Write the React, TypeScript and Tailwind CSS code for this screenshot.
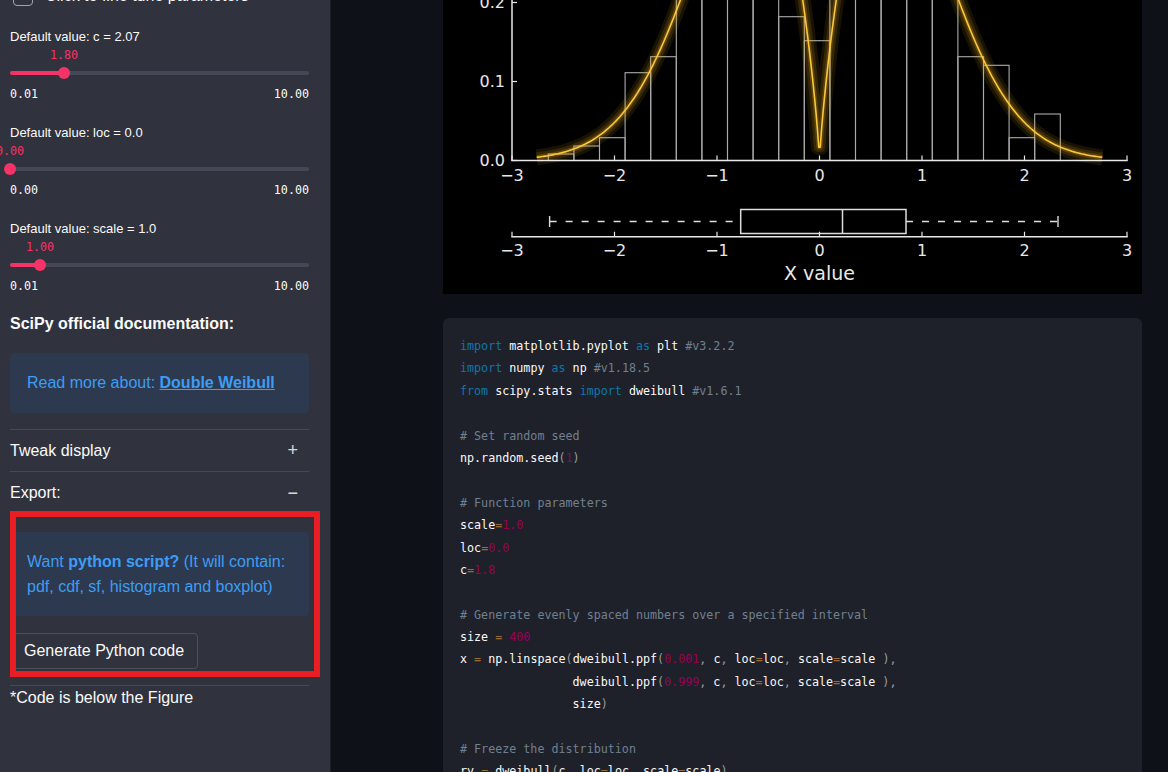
import React from 'react';

// Streamlit-like dark page: sidebar with sliders / expanders, matplotlib figure and code on the right.

function ParamSlider({ label, value, min, max, pos }: { label: string; value: string; min: string; max: string; pos: number }) {
  return (
    <div className="flex flex-col">
      <div className="h-4 text-[13px] leading-4 text-[#fafafa]">{label}</div>
      <div className="relative h-5">
        <span
          className="absolute top-0 -translate-x-1/2 font-['DejaVu_Sans_Mono',monospace] text-[11.7px] leading-5 text-[#f63366]"
          style={{ left: pos }}
        >
          {value}
        </span>
      </div>
      <div className="relative flex h-4 items-center">
        <div className="h-1 w-full rounded-full bg-[#464858]" />
        <div className="absolute left-0 h-1 rounded-full bg-[#f63366]" style={{ width: pos }} />
        <div className="absolute -ml-1.5 h-3 w-3 rounded-full bg-[#f63366]" style={{ left: pos }} />
      </div>
      <div className="mt-[6px] flex h-4 items-center justify-between font-['DejaVu_Sans_Mono',monospace] text-[11.7px] text-[#fafafa]">
        <span>{min}</span>
        <span>{max}</span>
      </div>
    </div>
  );
}

function Sidebar() {
  return (
    <aside className="h-full w-[330px] shrink-0 bg-[#30323e] pl-[10px] pr-[21px] font-['Liberation_Sans',Arial,sans-serif] text-[#fafafa]">
      {/* checkbox row, scrolled mostly out of view */}
      <div className="-mt-4 flex h-6 items-center gap-3">
        <span className="ml-[3px] h-5 w-5 rounded border border-[#a3a4ad]" />
        <span className="text-[16px]">Click to fine tune parameters</span>
      </div>

      <div className="mt-[21px] flex flex-col gap-[22px]">
        <ParamSlider label="Default value: c = 2.07" value="1.80" min="0.01" max="10.00" pos={54} />
        <ParamSlider label="Default value: loc = 0.0" value="0.00" min="0.00" max="10.00" pos={0} />
        <ParamSlider label="Default value: scale = 1.0" value="1.00" min="0.01" max="10.00" pos={30} />
      </div>

      <h3 className="mt-[19px] h-5 text-[16px] font-bold leading-5">SciPy official documentation:</h3>
      <div className="mt-[19px] flex h-[60px] items-center rounded bg-[#2d394f] px-[17px] text-[16px] text-[#3d9df3]">
        <span>
          Read more about: <span className="font-bold underline">Double Weibull</span>
        </span>
      </div>

      <div className="mt-4 border-t border-[#474956]">
        <div className="flex h-[41px] items-center justify-between pr-[11px] text-[16px]">
          <span>Tweak display</span>
          <span className="text-[18px] text-[#d8d8dc]">+</span>
        </div>
        <div className="flex h-[43px] items-center justify-between border-t border-[#474956] pr-[11px] text-[16px]">
          <span>Export:</span>
          <span className="text-[18px] text-[#d8d8dc]">−</span>
        </div>
        <div className="relative border-b border-[#474956] pt-[18px] pb-4">
          <div className="flex h-[84px] flex-col justify-center rounded bg-[#2d394f] px-[17px] text-[16px] leading-[25px] text-[#3d9df3]">
            <span>
              Want <span className="font-bold">python script?</span> (It will contain:
            </span>
            <span>pdf, cdf, sf, histogram and boxplot)</span>
          </div>
          <button className="mt-[17px] flex h-9 items-center rounded border border-[#4d4f5b] bg-[#30323e] px-[13px] text-[16px] text-[#fafafa]">
            Generate Python code
          </button>
          {/* red annotation frame */}
          <div className="pointer-events-none absolute -top-[3px] left-0 h-[166px] w-[310px] border-[6px] border-[#ea1c24]" />
        </div>
      </div>
      <p className="h-6 text-[16px] leading-6">*Code is below the Figure</p>
    </aside>
  );
}

// figure coordinates: x value -> px, density -> px
const X = (v: number) => 376.5 + 102.5 * v;
const Y = (p: number) => 160.5 - 790 * p;

function curvePath() {
  const c = 1.8;
  const lo = -Math.pow(Math.log(500), 1 / c);
  const pts: string[] = [];
  for (let i = 0; i < 400; i++) {
    const x = lo + (-2 * lo * i) / 399;
    const a = Math.abs(x);
    const p = (c / 2) * Math.pow(a, c - 1) * Math.exp(-Math.pow(a, c));
    pts.push(`${X(x).toFixed(2)},${Y(p).toFixed(2)}`);
  }
  return 'M' + pts.join(' L');
}

const BAR_TOPS = [154, 146, 137.7, 72.7, 56.7, -10, -10, -10, -10, 16.7, 40.7, -10, -10, -10, -10, -10, 56.7, 65.3, 137.7, 114];
const TICKS = [-3, -2, -1, 0, 1, 2, 3];
const label = (k: number) => (k < 0 ? `−${-k}` : `${k}`);

function Figure() {
  const d = curvePath();
  return (
    <svg width="699" height="294" viewBox="0 0 699 294" className="block bg-black" fontFamily="DejaVu Sans, sans-serif">
      {/* histogram */}
      {BAR_TOPS.map((t, i) => {
        const x0 = 105.3 + 25.6 * i;
        return <rect key={i} x={x0} y={t} width={25.6} height={160.5 - t} fill="none" stroke="#ababab" strokeWidth="1.1" />;
      })}
      {/* glowing pdf */}
      <path d={d} fill="none" stroke="#f0b020" strokeOpacity="0.1" strokeWidth="16" strokeLinejoin="round" />
      <path d={d} fill="none" stroke="#f0b020" strokeOpacity="0.14" strokeWidth="10" strokeLinejoin="round" />
      <path d={d} fill="none" stroke="#f0b020" strokeOpacity="0.2" strokeWidth="5" strokeLinejoin="round" />
      <path d={d} fill="none" stroke="#fcc73c" strokeWidth="1.6" strokeLinejoin="round" />

      {/* axes */}
      <line x1="69" y1="-5" x2="69" y2="161" stroke="#e8e8e8" strokeWidth="1.5" />
      <line x1="68.3" y1="160.5" x2="684.7" y2="160.5" stroke="#e8e8e8" strokeWidth="1.6" />
      {[0, 0.1, 0.2].map((v) => (
        <g key={v}>
          <line x1="69" y1={Y(v)} x2="74" y2={Y(v)} stroke="#e8e8e8" strokeWidth="1.2" />
          <text x="62" y={Y(v) + 5.8} textAnchor="end" fontSize="16" fill="#e8e8e8">
            {v.toFixed(1)}
          </text>
        </g>
      ))}
      {TICKS.map((k) => (
        <g key={k}>
          <line x1={X(k)} y1="155.5" x2={X(k)} y2="160.5" stroke="#e8e8e8" strokeWidth="1.2" />
          <text x={X(k)} y="181" textAnchor="middle" fontSize="16" fill="#e8e8e8">
            {label(k)}
          </text>
        </g>
      ))}

      {/* boxplot */}
      <line x1="106.6" y1="221.5" x2="297.7" y2="221.5" stroke="#dddddd" strokeWidth="1.4" strokeDasharray="7 9" />
      <line x1="463" y1="221.5" x2="615" y2="221.5" stroke="#dddddd" strokeWidth="1.4" strokeDasharray="7 9" />
      <line x1="106.6" y1="216" x2="106.6" y2="227" stroke="#dddddd" strokeWidth="1.4" />
      <line x1="615" y1="216" x2="615" y2="227" stroke="#dddddd" strokeWidth="1.4" />
      <rect x="297.7" y="209.5" width="165.3" height="24" fill="none" stroke="#dddddd" strokeWidth="1.5" />
      <line x1="399.5" y1="209.5" x2="399.5" y2="233.5" stroke="#dddddd" strokeWidth="1.5" />

      <line x1="68.3" y1="236.7" x2="684.7" y2="236.7" stroke="#e8e8e8" strokeWidth="1.6" />
      {TICKS.map((k) => (
        <g key={k}>
          <line x1={X(k)} y1="231.7" x2={X(k)} y2="236.7" stroke="#e8e8e8" strokeWidth="1.2" />
          <text x={X(k)} y="256" textAnchor="middle" fontSize="16" fill="#e8e8e8">
            {label(k)}
          </text>
        </g>
      ))}
      <text x="376.5" y="280" textAnchor="middle" fontSize="19" fill="#e8e8e8">
        X value
      </text>
    </svg>
  );
}

const K = 'text-[#0b77ad]';
const CM = 'text-[#708090]';
const N = 'text-[#990055]';
const O = 'text-[#9a6e3a]';
const P = 'text-[#9a9a9a]';

type Tok = [string, string?];

const CODE: Tok[][] = [
  [['import', K], [' matplotlib.pyplot '], ['as', K], [' plt '], ['#v3.2.2', CM]],
  [['import', K], [' numpy '], ['as', K], [' np '], ['#v1.18.5', CM]],
  [['from', K], [' scipy.stats '], ['import', K], [' dweibull '], ['#v1.6.1', CM]],
  [],
  [['# Set random seed', CM]],
  [['np.random.seed'], ['(', P], ['1', N], [')', P]],
  [],
  [['# Function parameters', CM]],
  [['scale'], ['=', O], ['1.0', N]],
  [['loc'], ['=', O], ['0.0', N]],
  [['c'], ['=', O], ['1.8', N]],
  [],
  [['# Generate evenly spaced numbers over a specified interval', CM]],
  [['size '], ['=', O], [' '], ['400', N]],
  [['x '], ['=', O], [' np.linspace'], ['(', P], ['dweibull.ppf'], ['(', P], ['0.001', N], [',', P], [' c'], [',', P], [' loc'], ['=', O], ['loc'], [',', P], [' scale'], ['=', O], ['scale '], [')', P], [',', P]],
  [['                dweibull.ppf'], ['(', P], ['0.999', N], [',', P], [' c'], [',', P], [' loc'], ['=', O], ['loc'], [',', P], [' scale'], ['=', O], ['scale '], [')', P], [',', P]],
  [['                size'], [')', P]],
  [],
  [['# Freeze the distribution', CM]],
  [['rv '], ['=', O], [' dweibull'], ['(', P], ['c'], [',', P], [' loc'], ['=', O], ['loc'], [',', P], [' scale'], ['=', O], ['scale'], [')', P]],
];

function CodeBlock() {
  return (
    <div className="mt-6 rounded-md bg-[#1f212a] px-[17px] pt-[17px] pb-6 font-['DejaVu_Sans_Mono',monospace] text-[11.7px] text-[#fafafa]">
      {CODE.map((line, i) => (
        <div key={i} className="h-[22.4px] whitespace-pre leading-[22.4px]">
          {line.map(([t, cls], j) => (
            <span key={j} className={cls}>
              {t}
            </span>
          ))}
        </div>
      ))}
    </div>
  );
}

export default function App() {
  return (
    <div className="flex h-[772px] w-full overflow-hidden bg-[#0e1117]">
      <Sidebar />
      <main className="h-full flex-1 border-l border-[#1b1e26]">
        <div className="ml-[112px] w-[699px]">
          <Figure />
          <CodeBlock />
        </div>
      </main>
    </div>
  );
}
